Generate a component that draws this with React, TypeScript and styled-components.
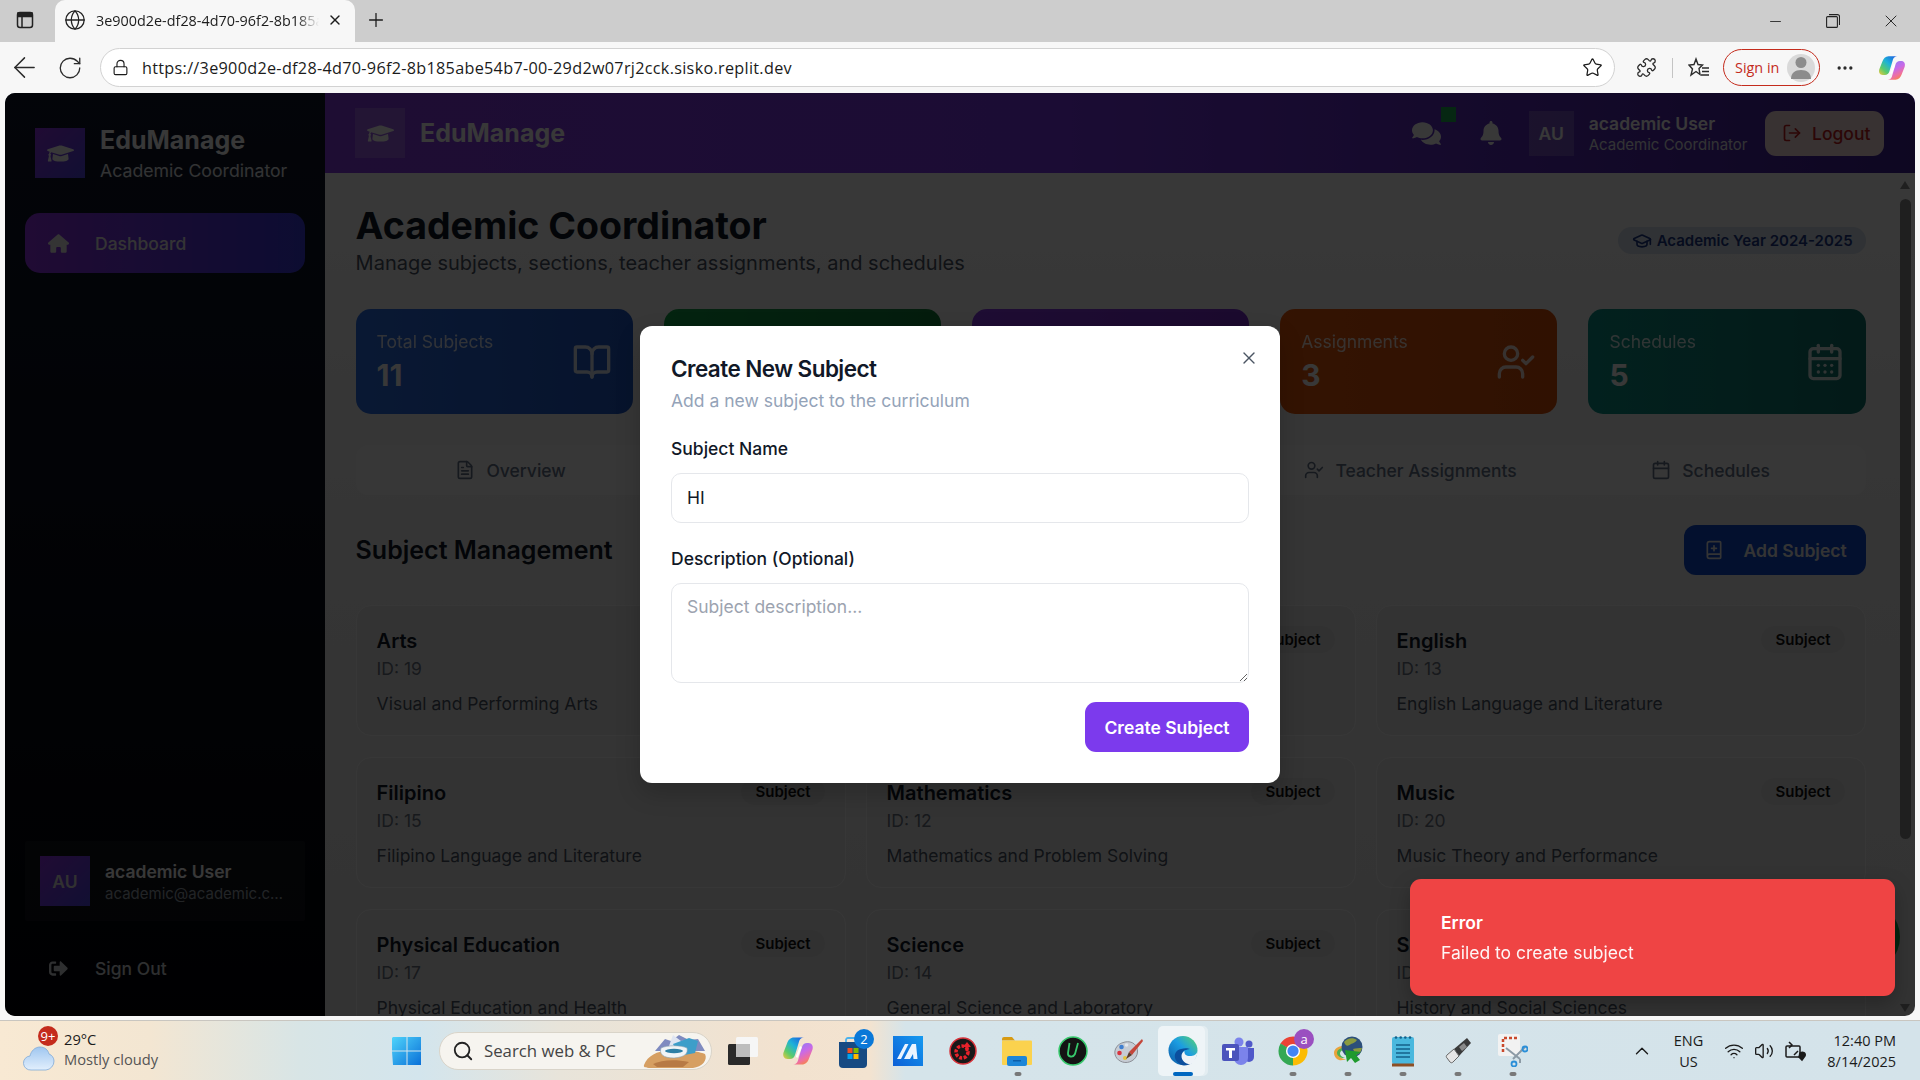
import React from "react";
import styled, { createGlobalStyle } from "styled-components";
import {
  ArrowLeft, RotateCw, Lock, Star, Puzzle, Globe, X, Plus, Minus, BookOpen, UserCheck, CalendarDays, Calendar,
  FileText, BookPlus, LogOut, GraduationCap, Users, Layers, Search, ChevronUp, Wifi, Volume2, MoreHorizontal,
} from "lucide-react";
import { FaGraduationCap, FaComments, FaBell, FaSignOutAlt } from "react-icons/fa";
import { FaHouse } from "react-icons/fa6";

const Global = createGlobalStyle`
  html, body { margin: 0; padding: 0; width: 1920px; height: 1080px; overflow: hidden; background: #f7f7f7; }
  * { box-sizing: border-box; }
  body { font-family: Inter, "Liberation Sans", sans-serif; }
`;

const Screen = styled.div`
  width: 1920px; height: 1080px; display: flex; flex-direction: column; background: #f7f7f7;
`;

/* ---------- browser chrome ---------- */
const TabStrip = styled.div`
  height: 42px; background: #cdcdcd; display: flex; align-items: stretch; flex: none; color: #1c1c1c;
`;
const PanelBtn = styled.div`
  width: 55px; display: flex; align-items: center; justify-content: center; padding: 0 5px 2px 0;
`;
const ActiveTab = styled.div`
  width: 300px; height: 42px; background: #f7f7f7; border-radius: 10px 10px 0 0; display: flex; align-items: center;
  padding: 0 0 2px 9px; font: 14.4px "Open Sans", "Noto Sans", sans-serif; color: #1c1c1c;
`;
const TabTitle = styled.span`
  width: 223px; margin-left: 10px; white-space: nowrap; overflow: hidden;
  -webkit-mask-image: linear-gradient(90deg, #000 90%, transparent);
  mask-image: linear-gradient(90deg, #000 90%, transparent);
`;
const TabClose = styled.span`
  display: flex; margin-left: 8px;
`;
const NewTab = styled.div`
  width: 42px; display: flex; align-items: center; justify-content: center; padding-bottom: 2px;
`;
const WindowControls = styled.div`
  margin-left: auto; display: flex; align-items: center;
`;
const WinBtn = styled.div`
  width: 58px; display: flex; align-items: center; justify-content: center; height: 40px;
`;
const Toolbar = styled.div`
  height: 51px; flex: none; background: #f7f7f7; display: flex; align-items: center; color: #2b2b2b;
`;
const BackBtn = styled.div`
  width: 49px; display: flex; align-items: center; justify-content: center;
`;
const ReloadBtn = styled.div`
  width: 51px; padding-left: 8px; display: flex; align-items: center;
`;
const UrlBar = styled.div`
  width: 1515px; height: 39px; border: 1.5px solid #d2d2d2; border-radius: 20px; background: #fff; display: flex;
  align-items: center; padding-left: 11px; padding-right: 11px; font: 16.2px "Open Sans", "Noto Sans", sans-serif; letter-spacing: .3px; color: #1b1b1b;
`;
const UrlText = styled.span`
  margin-left: 13px; flex: 1; white-space: nowrap;
`;
const ToolIcons = styled.div`
  display: flex; align-items: center; flex: 1; padding-left: 21px;
`;
const Divider = styled.div`
  width: 1px; height: 20px; background: #c4c4c4; margin: 0 15px 0 15px;
`;
const SignIn = styled.div`
  width: 97px; height: 37px; margin-left: 14px; border: 1.5px solid #c42b1c; border-radius: 19px; display: flex; align-items: center;
  padding-left: 11px; font: 14.4px "Open Sans", "Noto Sans", sans-serif; color: #c42b1c; justify-content: space-between; padding-right: 4px;
`;
const AvatarDisc = styled.div`
  width: 28px; height: 28px; border-radius: 50%; background: #d9d9d9; display: flex; align-items: center; justify-content: center;
`;
const Dots = styled.div`
  margin-left: 15px; width: 20px; display: flex; justify-content: center;
`;
const CopilotSlot = styled.div`
  margin-left: 23px; display: flex;
`;

/* ---------- web page ---------- */
const Page = styled.div`
  flex: none; height: 923px; margin: 0 5px; border-radius: 10px; overflow: hidden; display: flex; position: relative;
  background: #fff;
`;
const Sidebar = styled.aside`
  width: 320px; flex: none; display: flex; flex-direction: column; padding: 30px 20px 23px;
  background: linear-gradient(180deg, #0f172a, #020308); color: #fff;
`;
const Brand = styled.div`
  display: flex; align-items: center; height: 60px; gap: 15px; padding-left: 10px; margin-bottom: 30px;
`;
const LogoSquare = styled.div<{ $flat?: boolean }>`
  width: 50px; height: 50px; flex: none; display: flex; align-items: center; justify-content: center; color: #fff;
  background: ${(p) => (p.$flat ? "rgba(255,255,255,.2)" : "linear-gradient(135deg, #9333ea, #4f46e5)")};
`;
const BrandText = styled.div`
  padding-top: 1px;
`;
const BrandName = styled.div`
  font-size: 25px; line-height: 32px; font-weight: 700;
`;
const BrandSub = styled.div`
  font-size: 17.7px; line-height: 25px; margin-top: 2px; color: #e5e7eb;
`;
const NavItem = styled.div`
  height: 60px; border-radius: 15px; display: flex; align-items: center; padding-left: 21px; gap: 25px; font-size: 17.5px; font-weight: 500;
  background: linear-gradient(90deg, #9333ea, #3b3be0); color: #eee;
`;
const NavIcon = styled.span`
  width: 24px; display: flex; justify-content: center;
`;
const Spacer = styled.div`
  flex: 1;
`;
const UserCard = styled.div`
  height: 80px; background: rgba(255,255,255,.05); display: flex; align-items: center; padding: 0 15px; gap: 15px; border-radius: 2px;
`;
const SideAvatar = styled.div`
  width: 50px; height: 50px; flex: none; background: linear-gradient(135deg, #9333ea, #4f46e5); display: flex; align-items: center; justify-content: center;
  font-weight: 600; font-size: 17.5px; color: #ddd;
`;
const UserName = styled.div`
  font-size: 17.5px; line-height: 25px; font-weight: 600;
`;
const UserMail = styled.div`
  font-size: 15px; line-height: 20px; color: #9ca3af; width: 180px; overflow: hidden; white-space: nowrap; text-overflow: ellipsis;
`;
const SignOut = styled.div`
  height: 50px; margin-top: 22px; display: flex; align-items: center; padding-left: 21px; gap: 25px; font-size: 17.5px; font-weight: 500; color: #d1d5db;
`;

const Right = styled.div`
  flex: 1; min-width: 0; display: flex; flex-direction: column;
`;
const Header = styled.header`
  height: 80px; flex: none; display: flex; align-items: center; padding: 0 31px 0 30px; gap: 15px; color: #fff;
  background: linear-gradient(90deg, #8a3be8, #7c3aed 45%, #402098);
`;
const HeaderBrand = styled.div`
  font-size: 25px; font-weight: 700; line-height: 32px; flex: 1;
`;
const IconCluster = styled.div`
  display: flex; align-items: center; gap: 38px; margin-right: 11px;
`;
const ChatWrap = styled.div`
  position: relative; display: flex;
`;
const GreenDot = styled.span`
  position: absolute; left: 29px; top: -12px; width: 15px; height: 15px; background: #1fb155;
`;
const HeadAvatar = styled.div`
  width: 45px; height: 45px; background: rgba(255,255,255,.2); display: flex; align-items: center; justify-content: center; font-size: 17.5px; font-weight: 600;
`;
const HeadUser = styled.div`
  margin-right: 2.5px; padding-top: 2px;
`;
const HeadName = styled.div`
  font-size: 17.5px; line-height: 22px; font-weight: 600;
`;
const HeadRole = styled.div`
  font-size: 15px; line-height: 20px; color: #e5e7eb;
`;
const LogoutBtn = styled.div`
  width: 119px; height: 45px; border-radius: 11px; background: #fee2e2; color: #c81e1e; display: flex; align-items: center; gap: 10px; padding-left: 17px;
  font-size: 17.5px; font-weight: 500;
`;
const Body = styled.div`
  flex: 1; min-height: 0; display: flex; background: linear-gradient(180deg, #ffffff, #f0f0f0 45%, #e6e6e6);
`;
const Main = styled.main`
  flex: 1; min-width: 0; overflow: hidden; padding: 30px 29.4px 0 30.6px;
`;
const Scrollbar = styled.div`
  width: 20px; flex: none; display: flex; flex-direction: column; align-items: flex-start; padding: 5px 4px 4px 5px;
`;
const ArrowUp = styled.div`
  width: 0; height: 0; border-left: 5.5px solid transparent; border-right: 5.5px solid transparent; border-bottom: 8px solid #8f8f8f; margin-bottom: 10px; margin-top: 3px;
`;
const ArrowDown = styled(ArrowUp)`
  border-bottom: 0; border-top: 8px solid #8f8f8f; margin: auto 0 0;
`;
const Thumb = styled.div`
  width: 11px; height: 640px; border-radius: 6px; background: #8f8f8f;
`;
const TitleRow = styled.div`
  display: flex; align-items: center; justify-content: space-between;
`;
const H1 = styled.h1`
  margin: 0; font-size: 37.5px; line-height: 45px; font-weight: 700; color: #111827;
`;
const Sub = styled.p`
  margin: 0; font-size: 20px; line-height: 30px; color: #4b5563;
`;
const YearBadge = styled.div`
  height: 27px; border-radius: 14px; display: flex; align-items: center; gap: 5px; padding: 0 13px 0 14px; font-size: 15px; font-weight: 600;
  background: #d8e3f0; color: #1e3a8a;
`;
const Stats = styled.div`
  display: grid; grid-template-columns: repeat(5, 1fr); gap: 31px; margin-top: 31px;
`;
const Stat = styled.div<{ $a: string; $b: string }>`
  height: 105px; border-radius: 15px; padding: 20px 21px 0; display: flex; justify-content: space-between; color: #fff;
  background: linear-gradient(90deg, ${(p) => p.$a}, ${(p) => p.$b});
`;
const StatLabel = styled.div`
  font-size: 17.5px; line-height: 25px; opacity: .85;
`;
const StatValue = styled.div`
  font-size: 30px; line-height: 38px; font-weight: 700; margin-top: 2px;
`;
const StatIcon = styled.div`
  align-self: center; display: flex; margin-top: -20px; opacity: .85;
`;
const Tabs = styled.div`
  margin-top: 31px; height: 50px; border-radius: 12px; background: #fafafa; padding: 5px; display: grid; grid-template-columns: repeat(5, 1fr);
`;
const TabItem = styled.div`
  display: flex; align-items: center; justify-content: center; gap: 11px; font-size: 17.5px; font-weight: 500; color: #64748b;
`;
const SectionRow = styled.div`
  margin-top: 30px; height: 50px; display: flex; align-items: center; justify-content: space-between;
`;
const H2 = styled.h2`
  margin: 0; font-size: 25px; font-weight: 600; color: #111827;
`;
const AddBtn = styled.div`
  width: 182px; height: 50px; border-radius: 12px; background: #0f4ad0; color: #eee; display: flex; align-items: center; gap: 20px; padding-left: 20px;
  font-size: 17.5px; font-weight: 600;
`;
const SubjectGrid = styled.div`
  margin-top: 30px; display: grid; grid-template-columns: repeat(3, 1fr); gap: 21px 20px;
`;
const SubjectCard = styled.div`
  height: 131px; border: 1.25px solid #fafafa; border-radius: 15px; background: #e9e9e9; padding: 20px 20px 0; position: relative;
`;
const SubjectTop = styled.div`
  display: flex; justify-content: space-between; align-items: flex-start; height: 28px;
`;
const SubjectName = styled.div`
  font-size: 20px; line-height: 28px; font-weight: 600; color: #111827; margin-top: 1px;
`;
const SubjectBadge = styled.div`
  height: 27px; padding: 0 14px; border-radius: 14px; background: #e0e0e0; font-size: 15px; line-height: 27px; font-weight: 600; color: #111;
`;
const SubjectId = styled.div`
  font-size: 17.5px; line-height: 25px; color: #6b7280; margin-top: 2px;
`;
const SubjectDesc = styled.div`
  font-size: 17.5px; line-height: 25px; color: #4b5563; margin-top: 10px;
`;
const Floating = styled.div`
  position: absolute; right: 15px; bottom: 44px; width: 70px; height: 70px; border-radius: 50%; background: #16a34a;
`;
const Overlay = styled.div`
  position: absolute; inset: 0; background: rgba(0,0,0,.78); display: flex; align-items: center; justify-content: center;
`;
const Modal = styled.div`
  width: 640px; height: 457px; background: #fff; border-radius: 12px; padding: 29px 31px 0; position: relative; box-shadow: 0 10px 25px rgba(0,0,0,.2);
`;
const CloseBtn = styled.div`
  position: absolute; right: 21px; top: 22px; display: flex; color: #4b5563;
`;
const ModalTitle = styled.h3`
  margin: 0; font-size: 22.5px; line-height: 28px; font-weight: 600; letter-spacing: -.56px; color: #111827;
`;
const ModalDesc = styled.p`
  margin: 5px 0 22.5px; font-size: 17.5px; line-height: 25px; color: #94a3b8;
`;
const FieldLabel = styled.label`
  display: block; font-size: 17.5px; line-height: 25px; font-weight: 450; color: #111827;
`;
const TextInput = styled.input`
  display: block; width: 100%; height: 50px; margin: 12px 0 23px; border: 1.25px solid #e5e7eb; border-radius: 10px; padding: 0 15px;
  font: 17.5px Inter, sans-serif; color: #111827; outline: none; background: #fff;
`;
const TextArea = styled.textarea`
  display: block; width: 100%; height: 100px; margin: 12.5px 0 19px; border: 1.25px solid #e5e7eb; border-radius: 10px; padding: 10px 15px;
  font: 17.5px/25px Inter, sans-serif; color: #111827; outline: none; background: #fff;
  &::placeholder { color: #9ca3af; opacity: 1; }
`;
const ModalFooter = styled.div`
  display: flex; justify-content: flex-end;
`;
const CreateBtn = styled.div`
  width: 164px; height: 50px; border-radius: 11px; background: #7c3aed; color: #fff; font-size: 17.5px; font-weight: 600; display: flex; align-items: center; justify-content: center;
`;
const Toast = styled.div`
  position: absolute; right: 20px; bottom: 20px; width: 485px; height: 117px; border-radius: 11px; background: #ef4444; color: #fff; padding: 31px 31px 0;
  box-shadow: 0 8px 20px rgba(0,0,0,.25);
`;
const ToastTitle = styled.div`
  font-size: 17.5px; line-height: 25px; font-weight: 600;
`;
const ToastText = styled.div`
  font-size: 17.5px; line-height: 25px; margin-top: 5px; opacity: .95;
`;

/* ---------- taskbar ---------- */
const GapStrip = styled.div`
  height: 4px; flex: none; background: #f7f7f7;
`;
const Taskbar = styled.footer`
  height: 60px; flex: none; border-top: 1px solid #c9c6c0; display: flex; align-items: center; position: relative;
  background: linear-gradient(90deg, #f8e9d3 0, #f3e6d2 150px, #d8e5e6 300px, #d3e5ed 420px, #e8e4da 560px, #f2e2cf 780px, #f3e3d0 870px, #d5e4ea 905px, #d4e3ea 100%);
`;
const Weather = styled.div`
  width: 379px; flex: none; display: flex; align-items: center; padding-left: 23px; position: relative; font: 14.7px "Open Sans", sans-serif; color: #1b1b1b;
`;
const WeatherIcon = styled.div`
  position: relative; width: 41px; height: 40px; display: flex; align-items: flex-end;
`;
const CountBadge = styled.span`
  position: absolute; left: 15px; top: -5px; width: 20px; height: 20px; border-radius: 50%; background: #c42b1c; color: #fff; font: 13px/20px "Open Sans", sans-serif; text-align: center;
`;
const WeatherText = styled.div`
  line-height: 20px; margin-top: -3px;
`;
const MutedLine = styled.div`
  color: #555;
`;
const Slot = styled.div<{ $active?: boolean }>`
  width: 55px; height: 50px; flex: none; display: flex; align-items: center; justify-content: center; position: relative;
  ${(p) => p.$active && `
    &::before { content: ""; position: absolute; left: 3px; right: 5px; top: 0; bottom: 0; background: rgba(255,255,255,.6); border-radius: 5px; box-shadow: 3px 0 0 rgba(255,255,255,.35); }
    & > svg { position: relative; }
  `}
`;
const RunDot = styled.span<{ $active?: boolean }>`
  position: absolute; bottom: 0; left: 50%; transform: translateX(-50%); height: 4px; border-radius: 2px;
  width: ${(p) => (p.$active ? "20px" : "7px")}; background: ${(p) => (p.$active ? "#0067c0" : "#787878")};
`;
const IconBadge = styled.span<{ $bg: string }>`
  position: absolute; right: 6px; top: 3px; width: 20px; height: 20px; border-radius: 50%; background: ${(p) => p.$bg}; color: #fff;
  font: 13px/20px "Open Sans", sans-serif; text-align: center;
`;
const SearchBox = styled.div`
  width: 273px; height: 38px; margin: 0 3px 0 5px; border-radius: 19px; background: #f6f4ef; border: 1px solid #d9d4c9; display: flex; align-items: center; padding-left: 12px; gap: 10px;
  font: 16.8px "Open Sans", sans-serif; color: #444; flex: none; position: relative;
`;
const SearchArt = styled.span`
  position: absolute; right: 2px; top: 0; display: flex;
`;
const IconRow = styled.div`
  display: flex; align-items: center;
`;
const Tray = styled.div`
  margin-left: auto; display: flex; align-items: center; padding-right: 24px; font: 14.5px "Open Sans", sans-serif; color: #1b1b1b;
`;
const TrayLang = styled.div`
  text-align: center; line-height: 21px; margin: 0 21px;
`;
const TrayIcons = styled.div`
  display: flex; align-items: center; gap: 10px; margin-right: 19px;
`;
const Clock = styled.div`
  text-align: right; line-height: 21px;
`;

/* ---------- drawn logos ---------- */
const CopilotLogo = ({ s = 28, id = "a" }: { s?: number; id?: string }) => (
  <svg width={s} height={s} viewBox="0 0 32 32">
    <defs>
      <linearGradient id={`cp1${id}`} x1="0" y1="1" x2=".9" y2="0"><stop offset="0" stopColor="#f3c63c" /><stop offset=".28" stopColor="#5ccb6a" /><stop offset=".6" stopColor="#1db2d8" /><stop offset="1" stopColor="#1c5fe0" /></linearGradient>
      <linearGradient id={`cp2${id}`} x1=".2" y1="0" x2=".7" y2="1"><stop offset="0" stopColor="#8a7cf5" /><stop offset=".45" stopColor="#c86ae8" /><stop offset=".75" stopColor="#f0709c" /><stop offset="1" stopColor="#f58a3a" /></linearGradient>
    </defs>
    <path d="M20 29.500H11c2.500 0 4-1.500 4.800-3.500L20 12c.8-2.500 2.500-4 5-4h1.500c3.500 0 5 3 4 6.500l-3.500 9c-1.200 3.500-3.500 6-7 6z" fill={`url(#cp2${id})`} />
    <path d="M12 2.500h10c-2.500 0-4 1.500-4.800 3.500L13 20c-.8 2.500-2.500 4-5 4H5.500C2 24 .5 21 1.500 17.500l3.500-9C6.200 5 8.500 2.500 12 2.500z" fill={`url(#cp1${id})`} />
    <path d="M18.500 12.500l-3.500 9" stroke="#fff" strokeWidth="2.200" strokeLinecap="round" />
  </svg>
);
const WinLogo = () => (
  <svg width="30" height="30" viewBox="0 0 30 30">
    <defs><linearGradient id="wl" x1="0" y1="0" x2="1" y2="1"><stop offset="0" stopColor="#4fd4fb" /><stop offset="1" stopColor="#0a70d8" /></linearGradient></defs>
    <path d="M1 1h13.500v13.500H0V2zM15.500 1H29v13.500H15.500zM0 15.500h14.500V29H1zM15.500 15.500H29V29H15.500z" fill="url(#wl)" />
  </svg>
);
const TaskView = () => (
  <svg width="32" height="30" viewBox="0 0 32 30">
    <rect x="9" y="1" width="22" height="20" rx="1.500" fill="#f6f6f6" />
    <rect x="1" y="8" width="22" height="21" rx="1.500" fill="#2a2a2a" />
    <rect x="9" y="8" width="14" height="13" fill="#bdbdbd" />
  </svg>
);
const StoreIcon = () => (
  <svg width="30" height="34" viewBox="0 0 30 34">
    <path d="M8 9V6c0-1 .8-2 2-2h8" fill="none" stroke="#4db2ec" strokeWidth="1.800" />
    <path d="M1 8h28v22a4 4 0 0 1-4 4H5a4 4 0 0 1-4-4z" fill="#174a82" />
    <rect x="9.500" y="14" width="5" height="5" fill="#f25022" /><rect x="15.500" y="14" width="5" height="5" fill="#7fba00" />
    <rect x="9.500" y="20" width="5" height="5" fill="#00a4ef" /><rect x="15.500" y="20" width="5" height="5" fill="#ffb900" />
  </svg>
);
const MsBlue = () => (
  <svg width="30" height="30" viewBox="0 0 30 30">
    <defs><linearGradient id="msb" x1="0" y1="1" x2="1" y2="0"><stop offset="0" stopColor="#0b5fd6" /><stop offset="1" stopColor="#159af0" /></linearGradient></defs>
    <rect width="30" height="30" fill="url(#msb)" />
    <path d="M4 23L12 8h3.500L8 23zM11 23L19 8h4l1.500 15h-4l-.5-5-3 5z" fill="#eaf4ff" />
  </svg>
);
const RedGear = () => (
  <svg width="28" height="28" viewBox="0 0 28 28">
    <circle cx="14" cy="14" r="13" fill="#181818" stroke="#d8323a" strokeWidth="1.500" />
    <circle cx="13" cy="15" r="6" fill="none" stroke="#e8222b" strokeWidth="3.500" strokeDasharray="3 1.500" />
    <path d="M14 10l4-5 4 5h-2.500v4h-3v-4z" fill="#e8222b" />
  </svg>
);
const Folder = () => (
  <svg width="31" height="30" viewBox="0 0 31 30">
    <path d="M0 3a2 2 0 0 1 2-2h8l3 3.500H0z" fill="#d79a12" />
    <rect x="0" y="4.500" width="30" height="24.500" rx="1" fill="#fbd24e" />
    <rect x="5" y="20" width="20" height="10" rx="2" fill="#1d86d8" />
    <rect x="11" y="24" width="8" height="1.500" fill="#0d5ea8" />
  </svg>
);
const UCircle = () => (
  <svg width="30" height="30" viewBox="0 0 30 30">
    <circle cx="15" cy="15" r="14" fill="#141414" stroke="#37c96c" strokeWidth="1.500" />
    <path d="M11.500 7l-1.500 10c-.5 4 5 5 7 1L20 7" fill="none" stroke="#37c96c" strokeWidth="1.800" />
  </svg>
);
const Palette = () => (
  <svg width="32" height="30" viewBox="0 0 32 30">
    <path d="M13 6c7-1.500 13 3 12.500 10-.5 8-9 12-15 10C4 24 1.500 18 3.500 13 5 9 8.500 7 13 6z" fill="#c6ccd4" stroke="#8c8f96" />
    <circle cx="7.500" cy="17" r="2.300" fill="#d9343f" /><circle cx="9.500" cy="11" r="2.300" fill="#3f7fd0" /><circle cx="14.500" cy="9" r="1.800" fill="#e2e8ee" /><circle cx="13" cy="22" r="2" fill="#e2c33b" />
    <path d="M30 3L17 16l3 3L31 5z" fill="#c4463a" /><path d="M17 16l3 3-6 4z" fill="#5a3d2a" />
  </svg>
);
const Edge = () => (
  <svg width="30" height="31" viewBox="0 0 30 31">
    <defs>
      <linearGradient id="eda" x1="0" y1="1" x2="1" y2="0"><stop offset="0" stopColor="#0c59a4" /><stop offset=".55" stopColor="#1b9de2" /><stop offset="1" stopColor="#5ad66b" /></linearGradient>
    </defs>
    <circle cx="15" cy="15.500" r="14.500" fill="url(#eda)" />
    <path d="M13 14c-5 1-7 5-6 9 1 4 5 7 9 7.500 3 0 6-1 8-2.500-5 1-10-3-10-8 0-3 2-5 4-5 2-1 4-1 4-1-2-1-6-1-9 0z" fill="#0b4f9e" />
    <path d="M29.500 16c-1 4-4 5-7.500 5-4 0-6-2-5.500-5-2 1-3 3-3 5 0 5 5 9 10 8 3-3 6-8 6-13z" fill="#eef3f8" />
  </svg>
);
const Teams = () => (
  <svg width="32" height="28" viewBox="0 0 32 28">
    <circle cx="17" cy="5" r="4.500" fill="#7b83eb" /><circle cx="27" cy="7" r="3.500" fill="#5059c9" />
    <path d="M22 11h10v9a5 5 0 0 1-10 0z" fill="#5059c9" />
    <path d="M11 10h15v11a7 7 0 0 1-14 0z" fill="#7b83eb" />
    <rect x="0" y="7" width="17" height="17" rx="2" fill="#4b53bc" />
    <path d="M4 11h9v2.500h-3V21H7v-7.500H4z" fill="#fff" />
  </svg>
);
const Chrome = () => (
  <svg width="30" height="30" viewBox="0 0 32 32">
    <circle cx="16" cy="16" r="11" fill="none" stroke="#ea4335" strokeWidth="9" strokeDasharray="23.100 46" transform="rotate(210 16 16)" />
    <circle cx="16" cy="16" r="11" fill="none" stroke="#fbbc04" strokeWidth="9" strokeDasharray="23.100 46" transform="rotate(330 16 16)" />
    <circle cx="16" cy="16" r="11" fill="none" stroke="#34a853" strokeWidth="9" strokeDasharray="23.100 46" transform="rotate(90 16 16)" />
    <circle cx="16" cy="16" r="7.500" fill="#fff" /><circle cx="16" cy="16" r="6" fill="#4285f4" />
  </svg>
);
const Idm = () => (
  <svg width="32" height="30" viewBox="0 0 32 30">
    <path d="M2 17c0-4 4-7 9-7 2 0 4 1 5 2-5 0-9 2-9 6 0 3 3 5 7 5 0 0-4 2-7 1-3-1-5-4-5-7z" fill="#e9a33b" />
    <path d="M5 17c0-3 3-5 7-5l1 2c-3 0-5 1-5 3.500 0 2 2 4 5 4.500-4 .5-8-2-8-5z" fill="#4caf50" />
    <circle cx="20" cy="11" r="10.500" fill="#2c4f7a" />
    <path d="M12 6c3-4 9-5 13-2-2 3-4 3-6 4-3 2-5 3-7-2zM21 13c3-1 6-1 9-1-1 4-3 6-6 7z" fill="#8a9a3f" />
    <path d="M13 14l16 2-5 3 4 5-5 3-4-5-4 4z" fill="#1f9a2e" />
  </svg>
);
const Notepad = () => (
  <svg width="24" height="32" viewBox="0 0 24 32">
    <rect x="1" y="2" width="22" height="27" rx="2" fill="#4ab8de" />
    <rect x="1" y="28.500" width="22" height="3" fill="#8d4f24" />
    <path d="M5 10h14M5 14h14M5 18h14M5 22h14" stroke="#14608a" strokeWidth="1.600" />
    <circle cx="5" cy="2.500" r="1.300" fill="#14608a" /><circle cx="9.700" cy="2.500" r="1.300" fill="#14608a" /><circle cx="14.300" cy="2.500" r="1.300" fill="#14608a" /><circle cx="19" cy="2.500" r="1.300" fill="#14608a" />
  </svg>
);
const Usb = () => (
  <svg width="28" height="28" viewBox="0 0 28 28">
    <path d="M10 12L23 1l4 5L15 19z" fill="#3a3a3a" />
    <path d="M15 10l5-4 3 4-5 4z" fill="#8a8a8a" />
    <path d="M10 12l5 7-6 6c-1 1-2 1-3 0l-3-4c-1-1-1-2 0-3z" fill="#e6e6e6" stroke="#666" />
  </svg>
);
const Snip = () => (
  <svg width="30" height="33" viewBox="0 0 30 33">
    <rect x="0" y="0" width="22" height="22" rx="2" fill="#f2f2f2" />
    <path d="M5 18V4h14" fill="none" stroke="#c9482b" strokeWidth="2.500" strokeDasharray="3 2" />
    <path d="M8 14l14 11M27 13L15 25" fill="none" stroke="#8c9aa5" strokeWidth="2" />
    <path d="M22 25v4" stroke="#8c9aa5" strokeWidth="2" />
    <circle cx="27" cy="15" r="2.500" fill="none" stroke="#2b8fd8" strokeWidth="1.800" /><circle cx="16" cy="30" r="2.500" fill="none" stroke="#2b8fd8" strokeWidth="1.800" />
  </svg>
);
const Cloud = () => (
  <svg width="32" height="26" viewBox="0 0 32 26">
    <defs><linearGradient id="cl" x1="0" y1="0" x2="0" y2="1"><stop offset="0" stopColor="#9fc6f0" /><stop offset="1" stopColor="#e2effc" /></linearGradient></defs>
    <path d="M8 25a7 7 0 0 1-1-14c1-5 5-9 10-9 5 0 8 3 9 7 3 1 5 4 5 7a9 9 0 0 1-8 9z" fill="url(#cl)" stroke="#7fa9d8" strokeWidth=".8" />
  </svg>
);
const SearchPicture = () => (
  <svg width="66" height="36" viewBox="0 0 66 36">
    <path d="M12 18L22 6l6 2 8-6 10 5 9-1 7 12z" fill="#7f8bc0" />
    <path d="M30 2l8 6 8-1-2 6H26z" fill="#dfe5f2" />
    <path d="M1 32c4-10 15-15 28-14 14-1 27 0 33 3 3 6-3 13-12 14H10C4 35 0 35 1 32z" fill="#d69f62" />
    <path d="M10 31c8-4 22-5 36-2l-6 5H14z" fill="#b77a45" />
    <path d="M30 11l16-6 9 3-3 12-16 3z" fill="#3d9ec9" />
    <path d="M18 15c6-3 20-3 26 0 1 5-1 9-13 10-11 0-15-4-13-10z" fill="#f0f4f6" stroke="#8aa3b2" strokeWidth=".6" />
    <ellipse cx="31" cy="18" rx="9" ry="2.200" fill="#2d7fa5" />
  </svg>
);
const WindowsProfile = () => (
  <svg width="20" height="24" viewBox="0 0 20 24" fill="#8c8c8c">
    <circle cx="10" cy="6.500" r="5.500" /><path d="M0 23c0-6 4-9 10-9s10 3 10 9z" />
  </svg>
);
const TrayBattery = () => (
  <svg width="24" height="24" viewBox="0 0 24 24" fill="none" stroke="#1b1b1b" strokeWidth="1.500">
    <rect x="2" y="7" width="14" height="11" rx="1" /><path d="M5 3l3 3-3 3M14 12l-4 4" /><path d="M16 14c3-2 6 0 5 3l-3 4-3-3z" fill="#1b1b1b" />
  </svg>
);

const subjects = [
  ["Arts", "19", "Visual and Performing Arts"],
  ["Computer Science", "18", "Computer Science and Technology"],
  ["English", "13", "English Language and Literature"],
  ["Filipino", "15", "Filipino Language and Literature"],
  ["Mathematics", "12", "Mathematics and Problem Solving"],
  ["Music", "20", "Music Theory and Performance"],
  ["Physical Education", "17", "Physical Education and Health"],
  ["Science", "14", "General Science and Laboratory"],
  ["Social Studies", "16", "History and Social Sciences"],
];

const stats = [
  { l: "Total Subjects", v: "11", a: "#2c6fe8", b: "#1f58c8", I: BookOpen },
  { l: "Sections", v: "6", a: "#16a34a", b: "#15803d", I: Layers },
  { l: "Teachers", v: "8", a: "#8a3be8", b: "#7c2fd0", I: Users },
  { l: "Assignments", v: "3", a: "#ea580c", b: "#d94f08", I: UserCheck },
  { l: "Schedules", v: "5", a: "#0d9488", b: "#0f766e", I: CalendarDays },
];

const tabs = [
  { l: "Overview", I: FileText },
  { l: "Subjects", I: BookOpen },
  { l: "Sections", I: Layers },
  { l: "Teacher Assignments", I: UserCheck },
  { l: "Schedules", I: Calendar },
];

export default function App() {
  return (
    <Screen>
      <Global />
      <TabStrip>
        <PanelBtn>
          <svg width="20" height="20" viewBox="0 0 20 20" fill="none" stroke="#222" strokeWidth="1.500"><rect x="2.500" y="2.500" width="15" height="15" rx="2.500" /><path d="M3 3h14v3.500H3z" fill="#222" /><path d="M7 6.500v11" /></svg>
        </PanelBtn>
        <ActiveTab>
          <Globe size={22} strokeWidth={1.4} color="#222" />
          <TabTitle>3e900d2e-df28-4d70-96f2-8b185abe54b7</TabTitle>
          <TabClose><X size={16} strokeWidth={2} /></TabClose>
        </ActiveTab>
        <NewTab><Plus size={22} strokeWidth={1.4} /></NewTab>
        <WindowControls>
          <WinBtn><Minus size={17} strokeWidth={1.2} /></WinBtn>
          <WinBtn>
            <svg width="14" height="14" viewBox="0 0 14 14" fill="none" stroke="#222" strokeWidth="1.100"><rect x=".6" y="2.600" width="10.800" height="10.800" rx="1" /><path d="M3 .6h8.500a2 2 0 0 1 2 2V11" /></svg>
          </WinBtn>
          <WinBtn><X size={20} strokeWidth={1.1} /></WinBtn>
        </WindowControls>
      </TabStrip>
      <Toolbar>
        <BackBtn><ArrowLeft size={33} strokeWidth={1.05} /></BackBtn>
        <ReloadBtn><RotateCw size={26} strokeWidth={1.2} /></ReloadBtn>
        <UrlBar>
          <Lock size={17} strokeWidth={1.6} />
          <UrlText>https://3e900d2e-df28-4d70-96f2-8b185abe54b7-00-29d2w07rj2cck.sisko.replit.dev</UrlText>
          <Star size={21} strokeWidth={1.4} />
        </UrlBar>
        <ToolIcons>
          <Puzzle size={21} strokeWidth={1.5} />
          <Divider />
          <svg width="21" height="22" viewBox="0 0 21 22" fill="none" stroke="#2b2b2b" strokeWidth="1.400"><path d="M8 2l2 5.500 4.500.5-3.500 3.500 1 6-4-3-5 3.500 1.500-6L1 8l5-.5z" /><path d="M14 11h7M14 14.500h7M13 18h8" /></svg>
          <SignIn>
            Sign in
            <AvatarDisc><WindowsProfile /></AvatarDisc>
          </SignIn>
          <Dots><MoreHorizontal size={20} strokeWidth={2} /></Dots>
          <CopilotSlot><CopilotLogo id="tb" /></CopilotSlot>
        </ToolIcons>
      </Toolbar>

      <Page>
        <Sidebar>
          <Brand>
            <LogoSquare><FaGraduationCap size={27} /></LogoSquare>
            <BrandText>
              <BrandName>EduManage</BrandName>
              <BrandSub>Academic Coordinator</BrandSub>
            </BrandText>
          </Brand>
          <NavItem><NavIcon><FaHouse size={21} /></NavIcon>Dashboard</NavItem>
          <Spacer />
          <UserCard>
            <SideAvatar>AU</SideAvatar>
            <div>
              <UserName>academic User</UserName>
              <UserMail>academic@academic.com</UserMail>
            </div>
          </UserCard>
          <SignOut><NavIcon><FaSignOutAlt size={19} /></NavIcon>Sign Out</SignOut>
        </Sidebar>
        <Right>
          <Header>
            <LogoSquare $flat><FaGraduationCap size={27} /></LogoSquare>
            <HeaderBrand>EduManage</HeaderBrand>
            <IconCluster>
              <ChatWrap><FaComments size={29} /><GreenDot /></ChatWrap>
              <FaBell size={24} />
            </IconCluster>
            <HeadAvatar>AU</HeadAvatar>
            <HeadUser>
              <HeadName>academic User</HeadName>
              <HeadRole>Academic Coordinator</HeadRole>
            </HeadUser>
            <LogoutBtn><LogOut size={20} strokeWidth={2} />Logout</LogoutBtn>
          </Header>
          <Body>
            <Main>
              <TitleRow>
                <div>
                  <H1>Academic Coordinator</H1>
                  <Sub>Manage subjects, sections, teacher assignments, and schedules</Sub>
                </div>
                <YearBadge><GraduationCap size={20} strokeWidth={2} />Academic Year 2024-2025</YearBadge>
              </TitleRow>
              <Stats>
                {stats.map((s) => (
                  <Stat key={s.l} $a={s.a} $b={s.b}>
                    <div>
                      <StatLabel>{s.l}</StatLabel>
                      <StatValue>{s.v}</StatValue>
                    </div>
                    <StatIcon><s.I size={40} strokeWidth={2} /></StatIcon>
                  </Stat>
                ))}
              </Stats>
              <Tabs>
                {tabs.map((t) => (
                  <TabItem key={t.l}><t.I size={20} strokeWidth={2} />{t.l}</TabItem>
                ))}
              </Tabs>
              <SectionRow>
                <H2>Subject Management</H2>
                <AddBtn><BookPlus size={20} strokeWidth={2} />Add Subject</AddBtn>
              </SectionRow>
              <SubjectGrid>
                {subjects.map(([n, id, d]) => (
                  <SubjectCard key={n}>
                    <SubjectTop>
                      <SubjectName>{n}</SubjectName>
                      <SubjectBadge>Subject</SubjectBadge>
                    </SubjectTop>
                    <SubjectId>ID: {id}</SubjectId>
                    <SubjectDesc>{d}</SubjectDesc>
                  </SubjectCard>
                ))}
              </SubjectGrid>
            </Main>
            <Scrollbar>
              <ArrowUp />
              <Thumb />
              <ArrowDown />
            </Scrollbar>
          </Body>
        </Right>
        <Floating />
        <Overlay>
          <Modal>
            <CloseBtn><X size={20} strokeWidth={1.6} /></CloseBtn>
            <ModalTitle>Create New Subject</ModalTitle>
            <ModalDesc>Add a new subject to the curriculum</ModalDesc>
            <FieldLabel>Subject Name</FieldLabel>
            <TextInput readOnly value="HI" />
            <FieldLabel>Description (Optional)</FieldLabel>
            <TextArea readOnly placeholder="Subject description..." />
            <ModalFooter><CreateBtn>Create Subject</CreateBtn></ModalFooter>
          </Modal>
        </Overlay>
        <Toast>
          <ToastTitle>Error</ToastTitle>
          <ToastText>Failed to create subject</ToastText>
        </Toast>
      </Page>
      <GapStrip />
      <Taskbar>
        <Weather>
          <WeatherIcon><Cloud /><CountBadge>9+</CountBadge></WeatherIcon>
          <WeatherText>
            <div>29°C</div>
            <MutedLine>Mostly cloudy</MutedLine>
          </WeatherText>
        </Weather>
        <Slot><WinLogo /></Slot>
        <SearchBox>
          <Search size={22} strokeWidth={2} color="#222" />
          Search web &amp; PC
          <SearchArt><SearchPicture /></SearchArt>
        </SearchBox>
        <IconRow>
          <Slot><TaskView /></Slot>
          <Slot><CopilotLogo s={32} id="tk" /></Slot>
          <Slot><StoreIcon /><IconBadge $bg="#0a78d8">2</IconBadge></Slot>
          <Slot><MsBlue /></Slot>
          <Slot><RedGear /></Slot>
          <Slot><Folder /><RunDot /></Slot>
          <Slot><UCircle /></Slot>
          <Slot><Palette /></Slot>
          <Slot $active><Edge /><RunDot $active /></Slot>
          <Slot><Teams /></Slot>
          <Slot><Chrome /><IconBadge $bg="#9a4fc0">a</IconBadge><RunDot /></Slot>
          <Slot><Idm /><RunDot /></Slot>
          <Slot><Notepad /><RunDot /></Slot>
          <Slot><Usb /><RunDot /></Slot>
          <Slot><Snip /><RunDot /></Slot>
        </IconRow>
        <Tray>
          <ChevronUp size={22} strokeWidth={1.5} />
          <TrayLang>ENG<br />US</TrayLang>
          <TrayIcons>
            <Wifi size={20} strokeWidth={1.6} />
            <Volume2 size={20} strokeWidth={1.6} />
            <TrayBattery />
          </TrayIcons>
          <Clock>12:40 PM<br />8/14/2025</Clock>
        </Tray>
      </Taskbar>
    </Screen>
  );
}
